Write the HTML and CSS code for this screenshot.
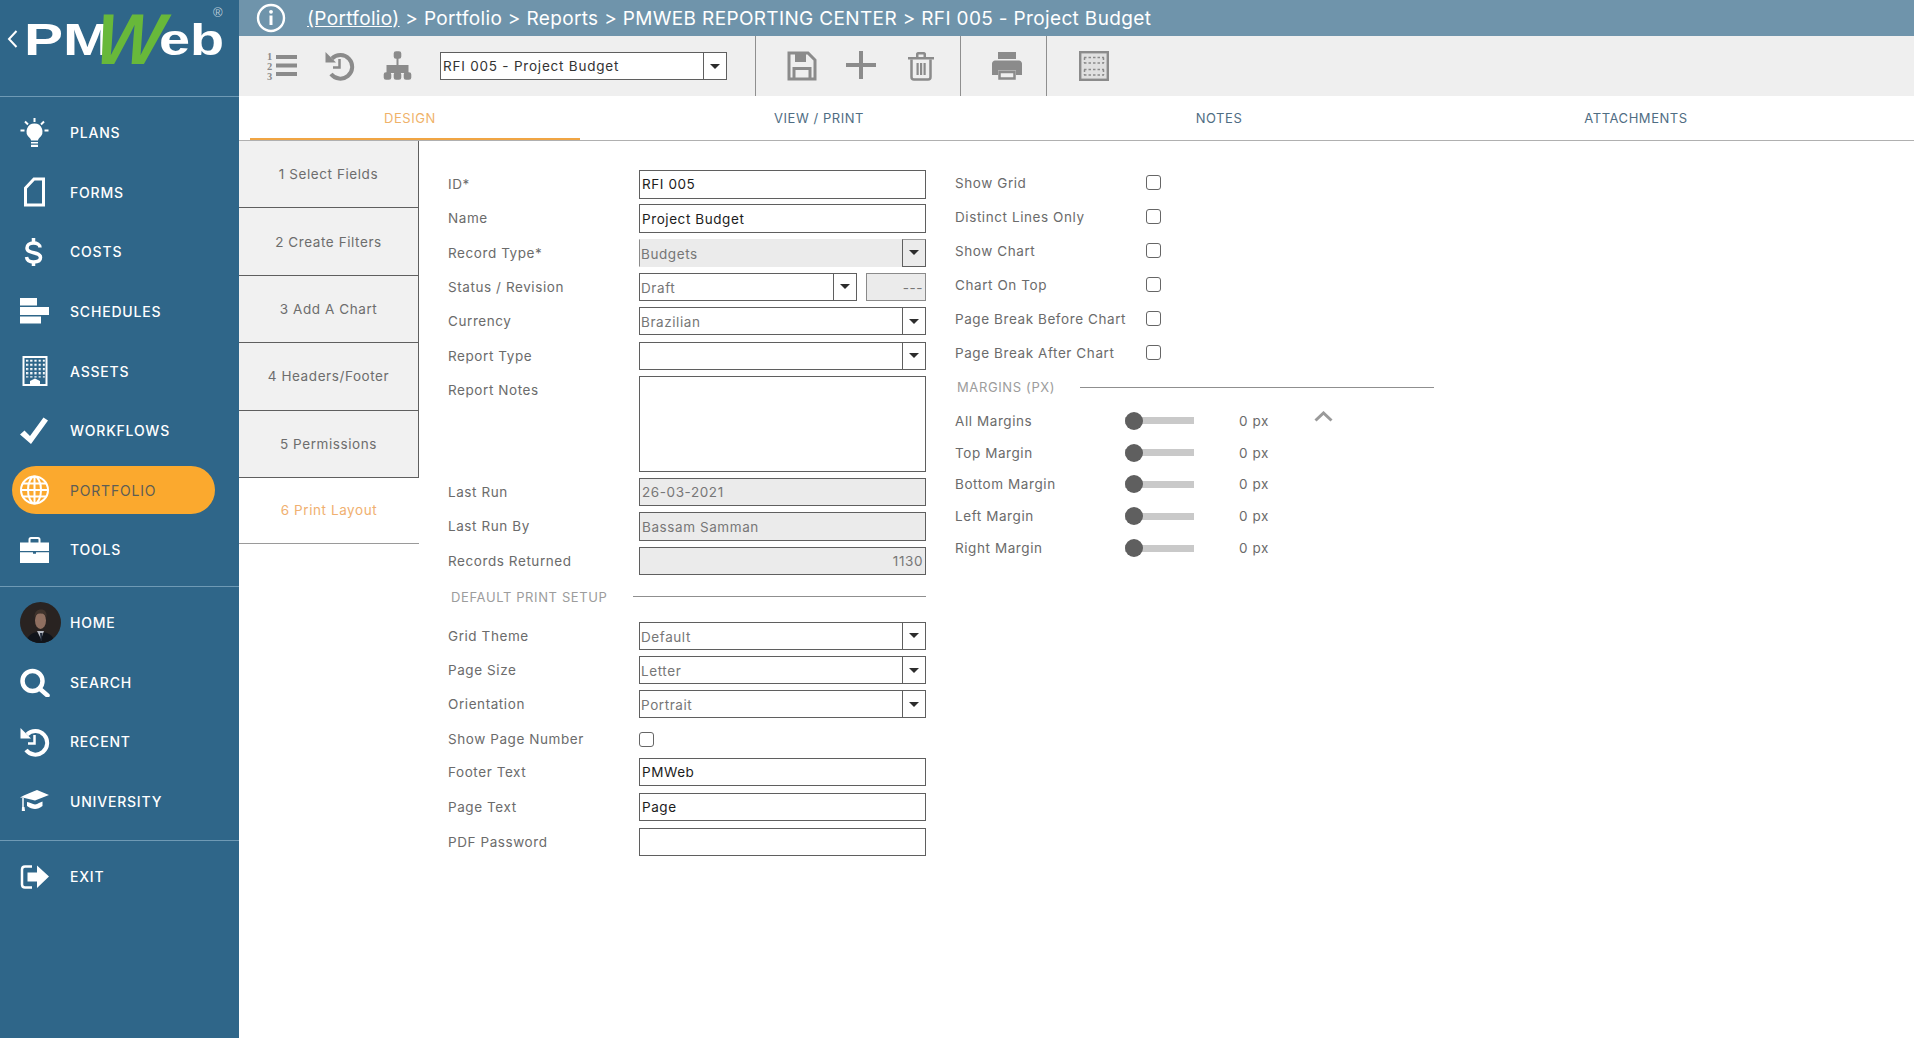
FILE: index.html
```html
<!DOCTYPE html>
<html lang="en">
<head>
    <meta charset="UTF-8">
    <title>PMWeb Reporting Center</title>
    <link rel="stylesheet" href="styles.css">
</head>
<body>

<div class="app">
    <aside class="sidebar">
        <div class="logo">
            <svg class="logo-back" width="11" height="18" viewBox="0 0 11 18"><path d="M9.5 1 L2 9 L9.5 17" fill="none" stroke="#fff" stroke-width="2"/></svg>
            <span class="logo-pm">PM</span><span class="logo-eb">eb</span>
            <span class="logo-w">W</span>
            <span class="logo-reg">®</span>
        </div>

        <nav class="nav-group">
            <a class="nav-item">
                <svg class="nav-icon" viewBox="0 0 30 30"><path d="M14.5 0v4M5 3.500l3 3M24 3.500l-3 3M0.500 12.500h4M24.500 12.500h4" stroke="#fff" stroke-width="2" fill="none"/><path d="M14.500 5.500a8 8 0 0 1 5 14.200c-1 1-1.500 2-1.500 2.800h-7c0-.8-.5-1.800-1.500-2.800a8 8 0 0 1 5-14.200z" fill="#fff"/><path d="M11 24h7v1.600h-7zM11 26.700h7V29h-7z" fill="#fff"/></svg>
                <span>PLANS</span>
            </a>
            <a class="nav-item">
                <svg class="nav-icon" viewBox="0 0 30 30"><path d="M5.500 28H23.500V2H14L5.500 11Z" fill="none" stroke="#fff" stroke-width="3"/></svg>
                <span>FORMS</span>
            </a>
            <a class="nav-item">
                <svg class="nav-icon" viewBox="0 0 30 30"><path d="M20 10.500C20 7.500 17 6 13.500 6 9.500 6 7 8 7 11c0 6.500 13.500 3 13.500 9.500 0 3-2.500 4.500-7 4.500-3.500 0-6.500-1.500-7-5" fill="none" stroke="#fff" stroke-width="3.500"/><path d="M13.500 1v5M13.500 24v5" stroke="#fff" stroke-width="3.500"/></svg>
                <span>COSTS</span>
            </a>
            <a class="nav-item">
                <svg class="nav-icon" viewBox="0 0 30 30"><path d="M0 1h17v7.500H0zM0 10h29v8H0zM0 19.500h21v7H0z" fill="#fff"/></svg>
                <span>SCHEDULES</span>
            </a>
            <a class="nav-item">
                <svg class="nav-icon" viewBox="0 0 30 30">
                    <defs><pattern id="windows" width="4.200" height="4.200" patternUnits="userSpaceOnUse" x="6" y="3.500"><rect width="2.200" height="2.200" fill="#fff"/></pattern></defs>
                    <rect x="3.500" y="1" width="23" height="28" fill="none" stroke="#fff" stroke-width="2"/>
                    <rect x="6" y="3.500" width="19" height="18" fill="url(#windows)"/>
                    <path d="M10 29v-4l5-2.500 5 2.500v4z" fill="#fff"/>
                </svg>
                <span>ASSETS</span>
            </a>
            <a class="nav-item">
                <svg class="nav-icon" viewBox="0 0 30 30"><path d="M0 18.500l4.500-4 5.500 5.500L23.500 1.500 28 4.500 11 28z" fill="#fff"/></svg>
                <span>WORKFLOWS</span>
            </a>
            <a class="nav-item active">
                <svg class="nav-icon" viewBox="0 0 30 30" fill="none" stroke="#fff" stroke-width="2"><circle cx="14.500" cy="15" r="13.500"/><ellipse cx="14.500" cy="15" rx="6.500" ry="13.500"/><path d="M14.500 1.500v27M1 15h27M3 8.500h23M3 21.500h23"/></svg>
                <span>PORTFOLIO</span>
            </a>
            <a class="nav-item">
                <svg class="nav-icon" viewBox="0 0 30 30"><path d="M9.500 8V4.500c0-1 .8-1.500 1.500-1.500h7c.8 0 1.500.5 1.500 1.500V8" fill="none" stroke="#fff" stroke-width="2"/><path d="M0 7.500h29v8.500H0zM0 17.200h13v1.500h3v-1.500h13V28H0z" fill="#fff"/></svg>
                <span>TOOLS</span>
            </a>
        </nav>

        <nav class="nav-group group-lower">
            <a class="nav-item">
                <svg class="avatar" viewBox="0 0 41 41">
                    <defs><clipPath id="round"><circle cx="20.500" cy="20.500" r="20.500"/></clipPath></defs>
                    <g clip-path="url(#round)">
                        <rect width="41" height="41" fill="#292321"/>
                        <path d="M6 41c1-8 7-11 14-11s14 3 15 11z" fill="#11141a"/>
                        <path d="M17 29l4 8 3-8z" fill="#b9bcc4"/>
                        <path d="M20 31l2.500 0-.8 8h-1z" fill="#222b3a"/>
                        <ellipse cx="20.500" cy="18.500" rx="5.500" ry="8.500" fill="#8f6f60"/>
                        <path d="M14.500 15c0-5 2.500-7.500 6.500-7.500s6 2.500 5.500 7.500c-2-3-3.500-3.500-6.500-3.500s-3.500 1.500-5.500 3.500z" fill="#3f332c"/>
                    </g>
                </svg>
                <span>HOME</span>
            </a>
            <a class="nav-item">
                <svg class="nav-icon" viewBox="0 0 30 30"><circle cx="12.500" cy="14" r="10" fill="none" stroke="#fff" stroke-width="4.500"/><path d="M19.500 21.500l8 7" stroke="#fff" stroke-width="4.500" stroke-linecap="round"/></svg>
                <span>SEARCH</span>
            </a>
            <a class="nav-item">
                <svg class="nav-icon" viewBox="0 0 30 30"><path d="M7 7.500A11.800 11.800 0 1 1 6 23" fill="none" stroke="#fff" stroke-width="4"/><path d="M0.500 1v10.500h10.500z" fill="#fff"/><path d="M14.500 8v8.500H8" fill="none" stroke="#fff" stroke-width="2.500"/></svg>
                <span>RECENT</span>
            </a>
            <a class="nav-item">
                <svg class="nav-icon" viewBox="0 0 30 30"><path d="M0 11.500C6 8 11 6.500 17 4l12 5-14 5.500L3.500 11.800z" fill="#fff"/><path d="M7 16c3 .5 5.500 1.800 8 2.500 3-.7 5-2 7.500-3v4.500c-2.500 2-5 3-7.500 3s-5.500-1-8-3z" fill="#fff"/><path d="M3 12v9.500" stroke="#fff" stroke-width="1.500"/><path d="M2 21h2.500l.5 4H1.800z" fill="#fff"/></svg>
                <span>UNIVERSITY</span>
            </a>
        </nav>

        <nav class="nav-group">
            <a class="nav-item">
                <svg class="nav-icon" viewBox="0 0 30 30"><path d="M12 4.500H5c-2 0-3 1-3 3v15c0 2 1 3 3 3h7" fill="none" stroke="#fff" stroke-width="2.500"/><path d="M7.500 10.500H17V3.500L29 14.500 17 26v-6.500H7.500z" fill="#fff"/></svg>
                <span>EXIT</span>
            </a>
        </nav>
    </aside>

    <main class="main">
        <header class="topbar">
            <svg class="info-icon" width="30" height="30" viewBox="0 0 30 30"><circle cx="15" cy="15" r="13" fill="none" stroke="#fff" stroke-width="2.400"/><circle cx="15" cy="8.800" r="1.900" fill="#fff"/><path d="M15 12.500v9.500" stroke="#fff" stroke-width="3"/></svg>
            <div class="crumbs"><a class="crumb-link">(Portfolio)</a> &gt; Portfolio &gt; Reports &gt; PMWEB REPORTING CENTER &gt; RFI 005 - Project Budget</div>
        </header>

        <div class="toolbar">
            <div class="tool-group">
                <svg class="tool-icon" viewBox="0 0 30 30"><text x="0" y="9" class="tool-num">1</text><text x="0" y="19" class="tool-num">2</text><text x="0" y="29" class="tool-num">3</text><path d="M9 4h21v4H9zM9 12.500h21v4H9zM9 21h21v4H9z"/></svg>
                <svg class="tool-icon" viewBox="0 0 30 30"><path d="M7 7.500A11.800 11.800 0 1 1 6 23" fill="none" stroke="#8b8b8b" stroke-width="4"/><path d="M0.500 1v10.500h10.500z"/><path d="M14.500 8v8.500H8" fill="none" stroke="#8b8b8b" stroke-width="2.500"/></svg>
                <svg class="tool-icon" viewBox="0 0 30 30" fill="none" stroke="#8b8b8b" stroke-width="1.600"><rect x="11.500" y="1" width="6" height="6" rx="1.500"/><rect x="1.500" y="22" width="6" height="6" rx="1.500"/><rect x="11.500" y="22" width="6" height="6" rx="1.500"/><rect x="21.500" y="22" width="6" height="6" rx="1.500"/><path d="M14.500 7v15M4.500 22v-7h20v7" stroke-width="2"/></svg>
                <div class="select toolbar-select"><span class="select-text dark">RFI 005 - Project Budget</span><span class="select-arrow"></span></div>
            </div>
            <div class="tool-group group-edit">
                <svg class="tool-icon" viewBox="0 0 30 30"><path d="M2 2H21L28 9V28H2Z" fill="none" stroke="#8b8b8b" stroke-width="3"/><path d="M8 2h11v9H8z"/><path d="M7 28V17.500h16V28" fill="none" stroke="#8b8b8b" stroke-width="3"/></svg>
                <svg class="tool-icon" viewBox="0 0 30 30"><path d="M13 0h4v28h-4z"/><path d="M0 12h30v4H0z"/></svg>
                <svg class="tool-icon icon-trash" viewBox="0 0 30 30"><path d="M1 6h26v2.500H1zM9 6V3c0-1 .8-2 2-2h6c1.200 0 2 1 2 2v3h-2.500V3.500h-5V6z"/><path d="M4.500 8.500V26c0 1.500 1 2.500 2.500 2.500h14c1.500 0 2.500-1 2.500-2.500V8.500" fill="none" stroke="#8b8b8b" stroke-width="2.500"/><path d="M9.500 12h2.200v12H9.500zM13 12h2.200v12H13zM16.500 12h2.200v12h-2.200z"/></svg>
            </div>
            <div class="tool-group group-print">
                <svg class="tool-icon" viewBox="0 0 30 30"><path d="M6 1h18v7H6z"/><path d="M3 9.500h24c1.500 0 3 1.500 3 3V24h-6v-4.500H6V24H0V12.500c0-1.500 1.500-3 3-3z"/><path d="M7.500 21h15v6.500h-15z" fill="none" stroke="#8b8b8b" stroke-width="2.500"/></svg>
            </div>
            <div class="tool-group group-last">
                <svg class="tool-icon" viewBox="0 0 30 30"><rect x="1.200" y="1.200" width="27.600" height="27.600" fill="#e0e0e0" stroke="#8b8b8b" stroke-width="2.400"/><path d="M5 6.500h20M5 12h20M5 18.500h20M5 24h20M5.500 6.500v5.500M24.500 6.500v5.500M5.500 18.500v5.500M24.500 18.500v5.500" fill="none" stroke="#8b8b8b" stroke-width="1.500" stroke-dasharray="2.500 2"/></svg>
            </div>
        </div>

        <div class="tabs">
            <a class="tab tab-design active">DESIGN</a>
            <a class="tab tab-view">VIEW / PRINT</a>
            <a class="tab tab-notes">NOTES</a>
            <a class="tab tab-attach">ATTACHMENTS</a>
        </div>

        <div class="content">
            <div class="steps">
                <a class="step">1 Select Fields</a>
                <a class="step">2 Create Filters</a>
                <a class="step">3 Add A Chart</a>
                <a class="step">4 Headers/Footer</a>
                <a class="step">5 Permissions</a>
                <a class="step active">6 Print Layout</a>
            </div>

            <section class="form-col">
                <div class="row"><label>ID*</label><input class="field" value="RFI 005"></div>
                <div class="row"><label>Name</label><input class="field" value="Project Budget"></div>
                <div class="row"><label>Record Type*</label><div class="select locked"><span class="select-text">Budgets</span><span class="select-arrow"></span></div></div>
                <div class="row"><label>Status / Revision</label>
                    <div class="status-pair">
                        <div class="select"><span class="select-text">Draft</span><span class="select-arrow"></span></div>
                        <input class="field locked right revision" value="---">
                    </div>
                </div>
                <div class="row"><label>Currency</label><div class="select"><span class="select-text">Brazilian</span><span class="select-arrow"></span></div></div>
                <div class="row"><label>Report Type</label><div class="select"><span class="select-text"></span><span class="select-arrow"></span></div></div>
                <div class="row row-notes"><label>Report Notes</label><textarea class="field notes"></textarea></div>
                <div class="row"><label>Last Run</label><input class="field locked" value="26-03-2021"></div>
                <div class="row"><label>Last Run By</label><input class="field locked" value="Bassam Samman"></div>
                <div class="row"><label>Records Returned</label><input class="field locked right" value="1130"></div>

                <div class="divider print-divider"><span>DEFAULT PRINT SETUP</span><i></i></div>

                <div class="row"><label>Grid Theme</label><div class="select"><span class="select-text">Default</span><span class="select-arrow"></span></div></div>
                <div class="row"><label>Page Size</label><div class="select"><span class="select-text">Letter</span><span class="select-arrow"></span></div></div>
                <div class="row"><label>Orientation</label><div class="select"><span class="select-text">Portrait</span><span class="select-arrow"></span></div></div>
                <div class="row row-check"><label>Show Page Number</label><input type="checkbox" class="check"></div>
                <div class="row row-wide"><label>Footer Text</label><input class="field" value="PMWeb"></div>
                <div class="row row-wide"><label>Page Text</label><input class="field" value="Page"></div>
                <div class="row row-wide"><label>PDF Password</label><input class="field" value=""></div>
            </section>

            <section class="options-col">
                <div class="opt-row"><label>Show Grid</label><input type="checkbox" class="check"></div>
                <div class="opt-row"><label>Distinct Lines Only</label><input type="checkbox" class="check"></div>
                <div class="opt-row"><label>Show Chart</label><input type="checkbox" class="check"></div>
                <div class="opt-row"><label>Chart On Top</label><input type="checkbox" class="check"></div>
                <div class="opt-row"><label>Page Break Before Chart</label><input type="checkbox" class="check"></div>
                <div class="opt-row"><label>Page Break After Chart</label><input type="checkbox" class="check"></div>

                <div class="divider margin-divider"><span>MARGINS (PX)</span><i></i></div>

                <div class="slider-row">
                    <label>All Margins</label><div class="track"><b></b></div><span class="px">0 px</span>
                    <svg class="collapse" width="19" height="11" viewBox="0 0 19 11"><path d="M1.500 9.500 L9.500 2 L17.500 9.500" fill="none" stroke="#9a9a9a" stroke-width="3"/></svg>
                </div>
                <div class="slider-row"><label>Top Margin</label><div class="track"><b></b></div><span class="px">0 px</span></div>
                <div class="slider-row"><label>Bottom Margin</label><div class="track"><b></b></div><span class="px">0 px</span></div>
                <div class="slider-row"><label>Left Margin</label><div class="track"><b></b></div><span class="px">0 px</span></div>
                <div class="slider-row"><label>Right Margin</label><div class="track"><b></b></div><span class="px">0 px</span></div>
            </section>
        </div>
    </main>
</div>

</body>
</html>
```

FILE: styles.css
```css
:root {
    --side-bg: #2f6689;
    --side-line: #6f9ab5;
    --head-bg: #6f94ab;
    --tool-bg: #efefef;
    --orange: #f0a544;
    --pill: #fba92e;
    --label: #6b6b6b;
    --border: #5f5f5f;
    --locked: #ebebeb;
    --icon: #8b8b8b;
}

* {
    box-sizing: border-box;
}

html, body {
    margin: 0;
    height: 100%;
    overflow: hidden;
}

body {
    font-family: Inter, "Open Sans", sans-serif;
    font-size: 13.5px;
    letter-spacing: 0.58px;
    color: var(--label);
    background: #fff;
}

.app {
    display: flex;
    height: 1038px;
}

/* sidebar */
.sidebar {
    width: 239px;
    flex: none;
    background: var(--side-bg);
    color: #fff;
}

.logo {
    position: relative;
    height: 97px;
    border-bottom: 1px solid var(--side-line);
    font-family: "Liberation Sans", Arial, sans-serif;
    font-weight: 700;
    font-size: 45px;
    letter-spacing: 0;
    line-height: 45px;
    padding: 17px 0 0 24px;
    display: flex;
    align-items: flex-start;
}

.logo-back {
    position: absolute;
    left: 7px;
    top: 30px;
}

.logo-pm {
    display: inline-block;
    width: 88px;
    transform: scaleX(1.3);
    transform-origin: left;
}

.logo-eb {
    display: inline-block;
    margin-left: 47px;
    transform: scaleX(1.24);
    transform-origin: left;
}

.logo-w {
    position: absolute;
    left: 96px;
    top: 3px;
    font-size: 72px;
    line-height: 72px;
    font-weight: 700;
    font-style: italic;
    color: #68b83a;
    transform: skewX(-6deg);
}

.logo-reg {
    position: absolute;
    left: 213px;
    top: 6px;
    font-size: 13px;
    line-height: 14px;
    font-weight: 400;
    color: #b9cbd8;
}

.nav-group {
    padding: 6px 0;
    border-bottom: 1px solid var(--side-line);
}

.group-lower {
    padding-bottom: 9px;
}

.nav-group:last-child {
    border-bottom: none;
}

.nav-item {
    display: flex;
    align-items: center;
    height: 59.6px;
    padding-left: 20px;
    gap: 20px;
    font-size: 14px;
    font-weight: 500;
    letter-spacing: 0.8px;
}

.nav-icon {
    width: 30px;
    height: 30px;
    flex: none;
}

.avatar {
    width: 41px;
    height: 41px;
    flex: none;
    margin-right: -11px;
}

.nav-item.active {
    height: 48px;
    margin: 5.8px 24px 5.8px 12px;
    padding-left: 8px;
    border-radius: 24px;
    background: var(--pill);
    color: #5d5d55;
    font-weight: 400;
}

/* top bars */
.main {
    flex: 1;
    min-width: 0;
}

.topbar {
    display: flex;
    align-items: center;
    height: 36px;
    padding-left: 17px;
    gap: 21px;
    background: var(--head-bg);
    color: #fff;
    font-size: 19px;
    letter-spacing: 0.35px;
}

.crumb-link {
    text-decoration: underline;
}

.toolbar {
    display: flex;
    height: 60px;
    background: var(--tool-bg);
}

.tool-group {
    display: flex;
    align-items: center;
    gap: 28px;
    padding: 0 28px;
    width: 517px;
    border-right: 1px solid #8f8f8f;
}

.group-edit {
    width: 205px;
    gap: 29px;
    padding-left: 31px;
}

.group-print {
    width: 86px;
    padding-left: 31px;
}

.group-last {
    width: auto;
    padding-left: 32px;
    border-right: none;
}

.tool-icon {
    width: 30px;
    height: 30px;
    flex: none;
    fill: var(--icon);
}

.icon-trash {
    margin-left: 2px;
}

.tool-num {
    font-family: "Liberation Serif", serif;
    font-size: 10.5px;
    font-weight: 700;
    letter-spacing: 0;
}

.tabs {
    display: flex;
    height: 45px;
    padding-left: 11px;
    border-bottom: 1px solid #b0b0b0;
}

.tab {
    display: flex;
    align-items: center;
    justify-content: center;
    height: 44px;
    padding-bottom: 1px;
    font-size: 13px;
    letter-spacing: 0.55px;
    color: #4f6d83;
}

.tab-design {
    width: 330px;
    padding-right: 10px;
}

.tab-view {
    width: 478px;
}

.tab-notes {
    width: 322px;
}

.tab-attach {
    width: 512px;
}

.tab.active {
    color: #efb26a;
    box-shadow: inset 0 -2px 0 var(--orange);
}

/* content */
.content {
    display: flex;
    align-items: flex-start;
}

.steps {
    width: 180px;
    flex: none;
}

.step {
    display: flex;
    align-items: center;
    justify-content: center;
    height: 67.4px;
    background: #f1f1f1;
    border-right: 1px solid var(--border);
    border-bottom: 1px solid var(--border);
    color: #6d6d6d;
}

.step.active {
    height: 66px;
    background: #fff;
    border-right: none;
    border-bottom-color: #9a9a9a;
    color: #f0b070;
}

.form-col {
    width: 507px;
    flex: none;
    padding: 29px 0 0 29px;
}

.row {
    display: flex;
    height: 34.33px;
}

.row label {
    width: 191px;
    flex: none;
    line-height: 28px;
}

.row-notes {
    height: 102px;
}

.row-check {
    height: 33px;
    align-items: center;
}

.row-check label {
    margin-top: -5px;
}

.row-wide {
    height: 35px;
}

.field {
    display: block;
    flex: 1;
    width: 100%;
    height: 28.5px;
    margin: 0;
    padding: 0 2px;
    border: 1px solid var(--border);
    border-radius: 0;
    background: #fff;
    outline: none;
    font: inherit;
    letter-spacing: inherit;
    color: #1c1c1c;
}

.notes {
    height: 96px;
    resize: none;
}

.field.locked {
    background: var(--locked);
    color: #777;
}

.field.right {
    text-align: right;
}

.revision {
    flex: none;
    width: 60px;
    padding-top: 2px;
    border-color: #8a8a8a;
}

.select {
    display: flex;
    flex: 1;
    height: 28px;
    border: 1px solid var(--border);
    background: #fff;
}

.select-text {
    flex: 1;
    padding: 1px 0 0 1px;
    line-height: 26px;
    color: #767676;
}

.select-text.dark {
    padding: 0 0 0 2px;
    letter-spacing: 0.78px;
    color: #333;
}

.select-arrow {
    display: flex;
    align-items: center;
    justify-content: center;
    flex: none;
    width: 23px;
    border-left: 1px solid var(--border);
}

.select-arrow::after {
    content: "";
    border-left: 5px solid transparent;
    border-right: 5px solid transparent;
    border-top: 5px solid #2d2d2d;
}

.select.locked {
    background: var(--locked);
    border-color: var(--locked);
    border-left-color: #8a8a8a;
}

.select.locked .select-arrow {
    border: 1px solid var(--border);
    border-top-color: #9a9a9a;
    margin: -1px -1px -1px 0;
    width: 24px;
}

.toolbar-select {
    flex: none;
    width: 287px;
    height: 28px;
    margin-left: -1px;
}

.status-pair {
    display: flex;
    flex: 1;
    gap: 9px;
}

.check {
    appearance: none;
    width: 15px;
    height: 15px;
    margin: 0;
    flex: none;
    border: 1px solid #666;
    border-radius: 3px;
    background: #fff;
}

.row-check .check {
    margin-top: -4px;
}

.opt-row .check {
    margin-top: -2px;
}

.divider {
    display: flex;
    align-items: center;
    font-size: 13px;
    letter-spacing: 0.62px;
    color: #9c9c9c;
}

.divider i {
    flex: 1;
    height: 1px;
    background: #8f8f8f;
}

.print-divider {
    height: 32px;
    margin-bottom: 8.8px;
    padding-left: 3px;
}

.print-divider i {
    margin-left: 25px;
}

.margin-divider {
    height: 34px;
    margin-bottom: 1px;
    padding-left: 2px;
}

.margin-divider i {
    margin-left: 25px;
}

.options-col {
    width: 479px;
    flex: none;
    margin-left: 29px;
    padding-top: 25px;
}

.opt-row {
    display: flex;
    align-items: center;
    height: 34px;
}

.opt-row label {
    width: 191px;
    flex: none;
}

.slider-row {
    display: flex;
    align-items: center;
    height: 31.8px;
}

.slider-row label {
    width: 170px;
    flex: none;
}

.track {
    display: flex;
    align-items: center;
    width: 69px;
    height: 7px;
    background: #c9c9c9;
}

.track b {
    display: block;
    flex: none;
    width: 18px;
    height: 18px;
    border-radius: 50%;
    background: #5f5f5f;
}

.px {
    width: 75px;
    margin-left: 45px;
}

.collapse {
    margin-bottom: 9px;
}
```
